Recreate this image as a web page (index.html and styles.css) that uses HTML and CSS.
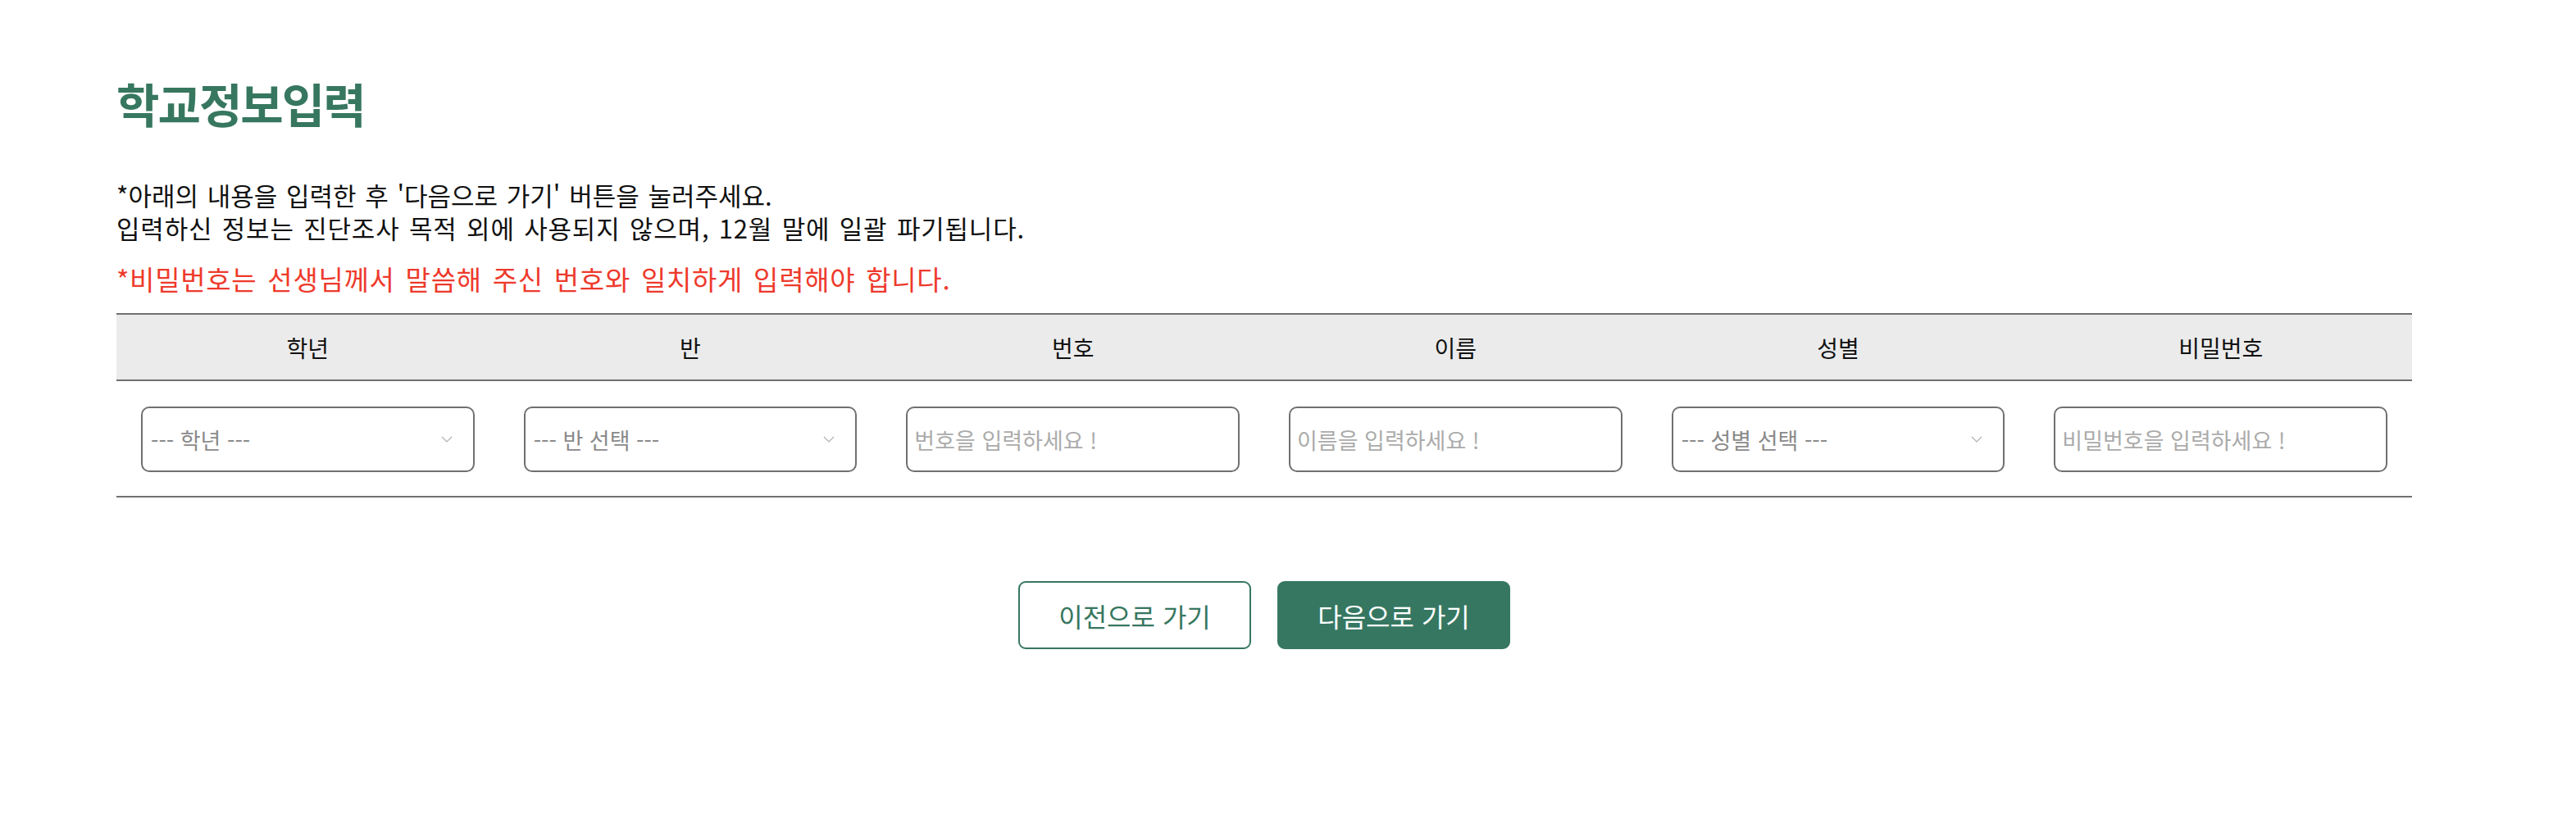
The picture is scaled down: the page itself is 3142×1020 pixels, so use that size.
FILE: index.html
```html
<!DOCTYPE html>
<html lang="ko">
<head>
<meta charset="utf-8">
<title>학교정보입력</title>
<link rel="stylesheet" href="styles.css">
</head>
<body>
<main class="page">
  <h1 class="title">학교정보입력</h1>
  <p class="guide">
    <span class="guide-line">*아래의 내용을 입력한 후 '다음으로 가기' 버튼을 눌러주세요.</span>
    <span class="guide-line guide-line-wide">입력하신 정보는 진단조사 목적 외에 사용되지 않으며, 12월 말에 일괄 파기됩니다.</span>
  </p>
  <p class="warn">*비밀번호는 선생님께서 말씀해 주신 번호와 일치하게 입력해야 합니다.</p>

  <div class="table">
    <div class="thead">
      <div class="th">학년</div>
      <div class="th">반</div>
      <div class="th">번호</div>
      <div class="th">이름</div>
      <div class="th">성별</div>
      <div class="th">비밀번호</div>
    </div>
    <div class="tbody">
      <div class="td">
        <div class="select-wrap">
          <select class="field select"><option>--- 학년 ---</option></select>
          <svg class="chev" viewBox="0 0 14 8" width="14" height="8"><path d="M1 1 L7 7 L13 1" fill="none" stroke="#b0b0b0" stroke-width="1.2"/></svg>
        </div>
      </div>
      <div class="td">
        <div class="select-wrap">
          <select class="field select"><option>--- 반 선택 ---</option></select>
          <svg class="chev" viewBox="0 0 14 8" width="14" height="8"><path d="M1 1 L7 7 L13 1" fill="none" stroke="#b0b0b0" stroke-width="1.2"/></svg>
        </div>
      </div>
      <div class="td"><input class="field input" type="text" placeholder="번호을 입력하세요 !"></div>
      <div class="td"><input class="field input" type="text" placeholder="이름을 입력하세요 !"></div>
      <div class="td">
        <div class="select-wrap">
          <select class="field select"><option>--- 성별 선택 ---</option></select>
          <svg class="chev" viewBox="0 0 14 8" width="14" height="8"><path d="M1 1 L7 7 L13 1" fill="none" stroke="#b0b0b0" stroke-width="1.2"/></svg>
        </div>
      </div>
      <div class="td"><input class="field input" type="password" placeholder="비밀번호을 입력하세요 !"></div>
    </div>
  </div>

  <div class="actions">
    <button class="btn btn-outline" type="button">이전으로 가기</button>
    <button class="btn btn-fill" type="button">다음으로 가기</button>
  </div>
</main>
</body>
</html>
```

FILE: styles.css
```css
* { box-sizing: border-box; }

body {
  margin: 0;
  background: #ffffff;
  font-family: "Noto Sans CJK KR", "Noto Sans", sans-serif;
  color: #111111;
}

.page {
  width: 2942px;
  padding: 0 0 0 142px;
}

.title {
  margin: 0;
  padding-top: 87px;
  font-size: 57px;
  line-height: 76px;
  font-weight: 700;
  letter-spacing: -2px;
  color: #37775f;
}

.guide {
  margin: 55px 0 0;
  font-size: 31px;
  line-height: 40px;
  word-spacing: 2px;
  color: #111111;
}

.guide-line {
  display: block;
}

.guide-line-wide {
  letter-spacing: 0.8px;
}

.warn {
  margin: 22px 0 0;
  font-size: 33px;
  line-height: 40px;
  word-spacing: 3px;
  letter-spacing: 0.7px;
  color: #ee3a2c;
}

.table {
  margin-top: 22px;
  width: 2800px;
  border-top: 2px solid #707070;
  border-bottom: 2px solid #707070;
}

.thead {
  display: grid;
  grid-template-columns: repeat(6, 1fr);
  background: #ebebeb;
  border-bottom: 2px solid #707070;
  height: 81px;
  align-items: center;
}

.th {
  text-align: center;
  font-size: 28px;
  line-height: 40px;
  color: #111111;
}

.tbody {
  display: grid;
  grid-template-columns: repeat(6, 1fr);
  padding: 31px 0 29px;
}

.td {
  display: flex;
  justify-content: center;
}

.select-wrap {
  position: relative;
  width: calc(100% - 60px);
}

.field {
  display: block;
  width: calc(100% - 60px);
  height: 80px;
  border: 2px solid #707070;
  border-radius: 10px;
  background: #ffffff;
  font-family: "Noto Sans CJK KR", "Noto Sans", sans-serif;
  font-size: 27px;
  outline: none;
}

.select-wrap .select {
  width: 100%;
}

.select {
  -webkit-appearance: none;
  appearance: none;
  padding: 0 40px 0 10px;
  color: #8a8a8a;
}

.chev {
  position: absolute;
  right: 27px;
  top: 36px;
}

.input {
  padding: 0 8px;
  color: #333333;
}

.input::placeholder {
  color: #ababab;
}

.actions {
  width: 2800px;
  display: flex;
  justify-content: center;
  gap: 32px;
  margin-top: 102px;
}

.btn {
  width: 284px;
  height: 83px;
  border-radius: 9px;
  font-family: "Noto Sans CJK KR", "Noto Sans", sans-serif;
  font-size: 32px;
  cursor: pointer;
}

.btn-outline {
  background: #ffffff;
  border: 2px solid #37775f;
  color: #37775f;
}

.btn-fill {
  background: #367762;
  border: 2px solid #367762;
  color: #ffffff;
}
```
